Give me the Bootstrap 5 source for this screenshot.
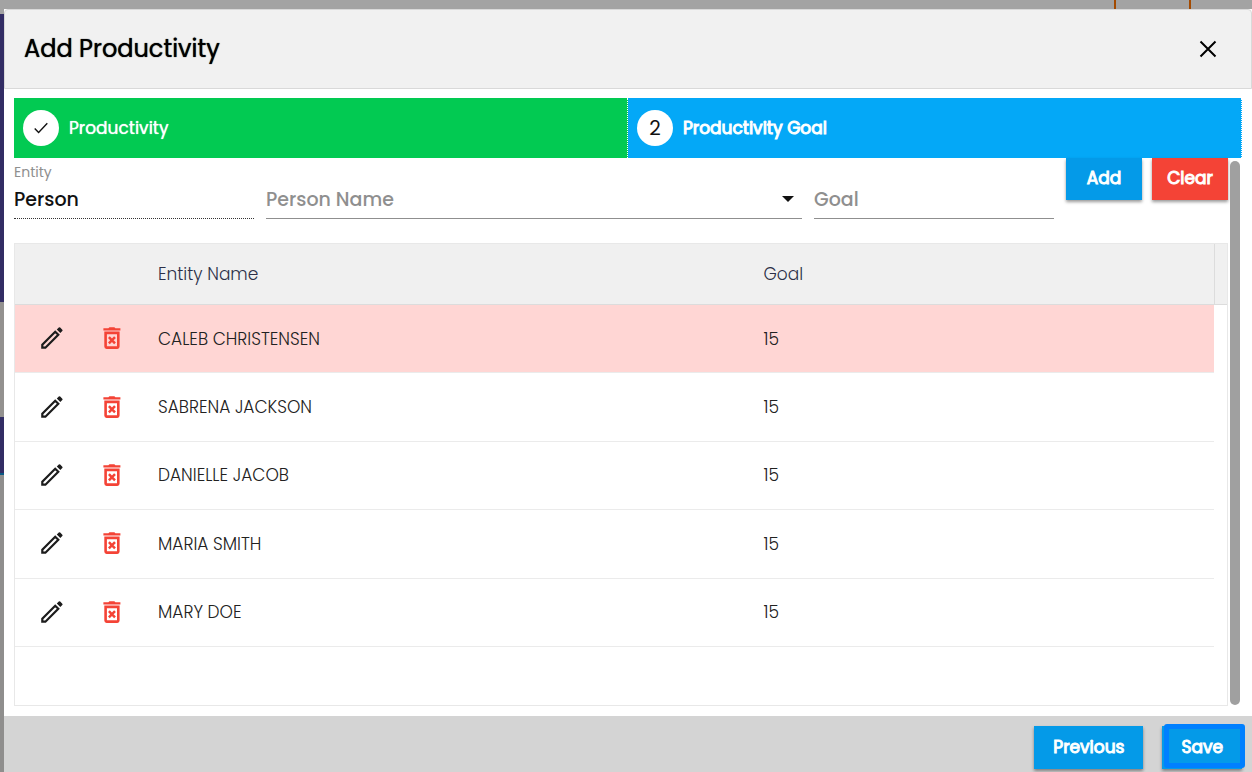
<!DOCTYPE html>
<html lang="en">
<head>
<meta charset="utf-8">
<meta name="viewport" content="width=device-width, initial-scale=1">
<title>Add Productivity</title>
<link href="https://cdn.jsdelivr.net/npm/bootstrap@5.3.0/dist/css/bootstrap.min.css" rel="stylesheet">
<style>
  body { font-family: Poppins, Inter, "Open Sans", sans-serif; color: #212121; font-size: 17px; line-height: 24px; }
  .page-behind {
    background:
      linear-gradient(#a3a3a3 14px, #322d64 14px, #322d64 302px, #93918f 302px, #93918f 417px, #322d64 417px, #322d64 473px, #0a5a85 473px, #0a5a85 475px, #8f8e8d 475px) left / 4px 100% no-repeat #a3a3a3;
    padding-left: 4px;
  }
  .top-strip { height: 9px; padding-right: 61px; gap: 73px; }
  .top-strip span { width: 2px; background: #a34a00; }
  .dialog-head { height: 80px; background: #f1f1f1; border: 1px solid #d9d9d9; border-radius: 4px 4px 0 0; padding: 0 27px 0 19px; }
  .dialog-head h1 { font-size: 24px; line-height: 32px; font-weight: 400; color: #000; text-shadow: 0 0 1px #000; }
  .close-btn { width: 32px; height: 32px; }
  .dialog-body { padding: 9px 10px 10px; }
  .step-item { flex: 1 1 0; height: 60px; border-right: 1px dotted #fff; padding: 0 9px; gap: 10px; color: #fff; }
  .step-item:hover { color: #fff; }
  .step-done { background: #02ca52; text-shadow: 0 0 1px #fff; }
  .step-now { background: #04a8f7; -webkit-text-stroke: 1px #fff; }
  .step-dot { width: 36px; height: 36px; background: #fff; color: #111; font-size: 20px; -webkit-text-stroke: 0; text-shadow: none; }
  .form-line { gap: 12px; padding-bottom: 24px; }
  .field-narrow { width: 240px; }
  .field-label { font-size: 14px; line-height: 20px; height: 20px; padding-top: 4px; color: #8f8f8f; }
  .line-input { font-size: 19px; font-weight: 500; height: 41px; line-height: 24px; padding: 5px 0 2px; border: 0; border-bottom: 1px solid #8f8f8f; border-radius: 0; background: none; width: 100%; color: #8f8f8f; appearance: none; outline: 0; }
  .line-input::placeholder { color: #8f8f8f; opacity: 1; }
  .line-input.filled { color: #111; border-bottom: 1px dotted #333; }
  .caret-mark { right: 8px; bottom: 17px; border: 6px solid transparent; border-top-color: #111; border-bottom: 0; pointer-events: none; }
  .flat-btn { border: 0; border-radius: 0; padding: 0 19px; height: 43px; color: #fff; font-size: 17px; -webkit-text-stroke: 1px #fff; background: #049ae8; box-shadow: 0 2px 3px rgba(0,0,0,.4); }
  .flat-btn:hover { background: #0389d0; color: #fff; }
  .form-line .flat-btn { height: 42px; width: 76px; padding: 0; }
  .form-buttons { gap: 10px; }
  .clear-btn, .clear-btn:hover { background: #f44336; }
  .scroll-part { margin-right: 2px; }
  .grid-box { border: 1px solid #e8e8e8; }
  .grid-gutter { width: 13px; height: 61px; background: #f0f0f0; border-left: 1px solid #dcdcdc; border-bottom: 1px solid #dcdcdc; }
  .goal-table { table-layout: fixed; border-collapse: separate; border-spacing: 0; height: 403px; font-weight: 300; }
  .goal-table th { height: 61px; background: #f0f0f0; font-weight: 300; color: #2c3048; border-bottom: 1px solid #dcdcdc; padding: 0; }
  .goal-table td { padding: 0; border-bottom: 1px solid #ebebeb; }
  .goal-table .picked td { background: #ffd6d4; }
  .icon-col { width: 60px; }
  .entity-col { width: 50%; }
  .goal-table .edit-cell { padding: 0 0 1px 26px; }
  .goal-table .drop-cell { padding: 0 0 1px 28px; }
  .goal-table .text-cell { padding-left: 23px; }
  .goal-table .goal-cell { padding-left: 29px; }
  .thumb-track { width: 10px; margin: 3px 2px 1px 0; background: #a0a0a0; border-radius: 5px; }
  .dialog-foot { background: #d4d4d4; padding: 10px 10px 3px; gap: 19px; }
  .save-btn::after { content: ""; position: absolute; inset: -2px -3px 1px 2px; border: 5px solid #0080ff; border-radius: 3px; }
</style>
</head>
<body>
<svg class="d-none" aria-hidden="true">
  <symbol id="pencil" viewBox="0 0 22 22">
    <path d="M1.3 20.7v-3.1L14.2 4.7l3.1 3.1L4.4 20.7z" fill="none" stroke="#1c1c1c" stroke-width="2.2"/>
    <path d="M15.800 2.600l2-2q.7-.6 1.4 0l2.1 2.1q.7.7 0 1.4l-2 2z" fill="#1c1c1c"/>
  </symbol>
  <symbol id="bin" viewBox="0 0 18 22">
    <path d="M.4 1.200h5L6.400.2h5l1 1h5v2.400h-17z" fill="#f44336"/>
    <path d="M2.600 5.900h12.700v13.700q0 1-1 1H3.600q-1 0-1-1z" fill="none" stroke="#f44336" stroke-width="2.600"/>
    <path d="M5.900 10.200l6.100 6.100M12 10.200l-6.100 6.100" stroke="#f44336" stroke-width="2.500"/>
  </symbol>
</svg>

<div class="page-behind min-vh-100 d-flex flex-column">
  <div class="top-strip d-flex justify-content-end"><span></span><span></span></div>
  <div class="bg-white flex-grow-1 d-flex flex-column" role="dialog" aria-labelledby="dialogTitle">
    <header class="dialog-head d-flex align-items-center justify-content-between">
      <h1 class="m-0" id="dialogTitle">Add Productivity</h1>
      <button class="close-btn btn p-0 border-0 d-flex align-items-center justify-content-center" type="button" aria-label="Close">
        <svg width="18" height="18" viewBox="0 0 18 18"><path d="M1.500 1.500l15 15M16.500 1.500l-15 15" stroke="#000" stroke-width="2"/></svg>
      </button>
    </header>

    <main class="dialog-body flex-grow-1 d-flex flex-column">
      <nav class="d-flex" aria-label="Steps">
        <a href="#" class="step-item step-done d-flex align-items-center text-decoration-none">
          <span class="step-dot rounded-circle d-flex align-items-center justify-content-center">
            <svg width="14" height="12" viewBox="0 0 14 12"><path d="M.7 6.500l3.900 3.900L13.300 1.300" fill="none" stroke="#111" stroke-width="1.400"/></svg>
          </span>Productivity
        </a>
        <a href="#" class="step-item step-now d-flex align-items-center text-decoration-none" aria-current="step">
          <span class="step-dot rounded-circle d-flex align-items-center justify-content-center">2</span>Productivity Goal
        </a>
      </nav>

      <div class="flex-grow-1 d-flex">
        <div class="scroll-part flex-grow-1 d-flex flex-column">
          <form class="form-line d-flex align-items-start">
            <div class="field-narrow">
              <label class="field-label d-block" for="entity">Entity</label>
              <input class="line-input filled" id="entity" value="Person" readonly>
            </div>
            <div class="flex-grow-1 position-relative">
              <div class="field-label"></div>
              <select class="line-input" aria-label="Person Name"><option>Person Name</option></select>
              <span class="caret-mark position-absolute"></span>
            </div>
            <div class="field-narrow">
              <div class="field-label"></div>
              <input class="line-input" placeholder="Goal" aria-label="Goal">
            </div>
            <div class="form-buttons d-flex">
              <button class="flat-btn btn" type="button">Add</button>
              <button class="flat-btn clear-btn btn" type="button">Clear</button>
            </div>
          </form>

          <div class="grid-box flex-grow-1 d-flex align-items-start">
            <table class="goal-table w-100 align-middle">
              <colgroup><col class="icon-col"><col class="icon-col"><col class="entity-col"><col></colgroup>
              <thead>
                <tr><th></th><th></th><th class="text-cell" scope="col">Entity Name</th><th class="goal-cell" scope="col">Goal</th></tr>
              </thead>
              <tbody id="goalRows"></tbody>
            </table>
            <div class="grid-gutter flex-shrink-0"></div>
          </div>
        </div>
        <div class="thumb-track flex-shrink-0"></div>
      </div>
    </main>

    <footer class="dialog-foot d-flex justify-content-end">
      <button class="flat-btn btn" type="button">Previous</button>
      <button class="flat-btn save-btn btn position-relative" type="button">Save</button>
    </footer>
  </div>
</div>

<script src="https://cdn.jsdelivr.net/npm/bootstrap@5.3.0/dist/js/bootstrap.bundle.min.js"></script>
<script>
  const goals = [
    ["CALEB CHRISTENSEN", 15],
    ["SABRENA JACKSON", 15],
    ["DANIELLE JACOB", 15],
    ["MARIA SMITH", 15],
    ["MARY DOE", 15]
  ];
  document.getElementById("goalRows").innerHTML = goals.map(([name, goal], i) => `
    <tr class="${i === 0 ? "picked" : ""}">
      <td class="edit-cell"><button class="btn p-0 border-0 d-block" type="button" aria-label="Edit ${name}"><svg class="d-block" width="22" height="22"><use href="#pencil"/></svg></button></td>
      <td class="drop-cell"><button class="btn p-0 border-0 d-block" type="button" aria-label="Delete ${name}"><svg class="d-block" width="18" height="22"><use href="#bin"/></svg></button></td>
      <td class="text-cell">${name}</td>
      <td class="goal-cell">${goal}</td>
    </tr>`).join("");
</script>
</body>
</html>
